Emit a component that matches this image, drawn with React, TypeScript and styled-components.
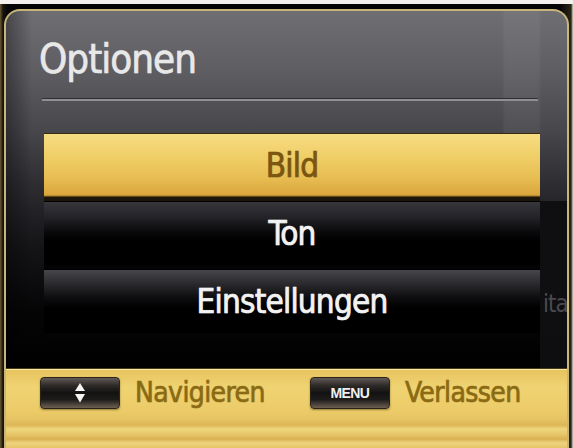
import React from "react";
import styled, { createGlobalStyle } from "styled-components";

const GlobalStyle = createGlobalStyle`
  html, body {
    margin: 0;
    padding: 0;
    background: #f4f2ee;
  }
  * {
    box-sizing: border-box;
  }
`;

const FONT = `"DejaVu Sans Condensed", "DejaVu Sans", "Liberation Sans", sans-serif`;

const Screen = styled.div`
  width: 573px;
  height: 448px;
  padding-top: 4px;
  overflow: hidden;
  background: #f4f2ee;
  font-family: ${FONT};
  font-stretch: condensed;
`;

const Frame = styled.div`
  height: 444px;
  padding: 5px 4px 0 4px;
  background: linear-gradient(to right, #6a5a30 0px, #15130e 3px, #050505 8px, #050505 560px, #2a2618 571px, #d8d2c0 573px);
`;

const Panel = styled.div`
  height: 100%;
  display: flex;
  flex-direction: column;
  overflow: hidden;
  border: 2px solid #c8b57a;
  border-bottom: none;
  border-radius: 16px 16px 0 0;
  background:
    linear-gradient(to right, rgba(0, 0, 0, 0.35) 0px, rgba(0, 0, 0, 0) 26px),
    linear-gradient(
      to bottom,
      #6e6e73 0px,
      #5d5d62 60px,
      #47474c 118px,
      #2c2c31 175px,
      #151518 235px,
      #050506 300px,
      #000 360px
    );
`;

const Header = styled.div`
  height: 122px;
  flex-shrink: 0;
  padding: 24px 0 0 33px;
  background: linear-gradient(
    to right,
    transparent 0px,
    transparent 496px,
    rgba(255, 255, 255, 0.05) 499px,
    rgba(255, 255, 255, 0.05) 532px,
    transparent 536px
  );
`;

const Title = styled.div`
  font-size: 40px;
  line-height: 48px;
  letter-spacing: -1px;
  color: #e8e8e8;
  -webkit-text-stroke: 0.5px #e8e8e8;
  text-shadow: 0 0 1px rgba(255, 255, 255, 0.5);
`;

const Divider = styled.div`
  width: 496px;
  height: 3px;
  margin: 15px 0 0 3px;
  border-top: 1px solid #2e2e33;
  background: #8f8f94;
`;

const Menu = styled.div`
  display: flex;
  flex-direction: column;
`;

const MenuRow = styled.div`
  display: flex;
  height: 68px;
`;

const Item = styled.div<{ $active?: boolean; $tone?: "dark" | "grey" }>`
  width: 496px;
  margin-left: 38px;
  display: flex;
  align-items: center;
  justify-content: center;
  font-size: 33px;
  letter-spacing: -0.8px;
  color: ${(p) => (p.$active ? "#7a5612" : "#f2f2f2")};
  -webkit-text-stroke: 0.6px ${(p) => (p.$active ? "#7a5612" : "#f2f2f2")};
  border-top: 1px solid ${(p) => (p.$active ? "#3a2a0e" : "transparent")};
  border-bottom: 4px solid ${(p) => (p.$active ? "#1c150a" : "#040405")};
  background: ${(p) =>
    p.$active
      ? "linear-gradient(to bottom, #f6dc82 0%, #f0cf68 35%, #e7bd52 70%, #d9a63c 97%, #3a2a0e 100%)"
      : p.$tone === "grey"
      ? "linear-gradient(to bottom, #46464b 0%, #2a2a2e 22%, #0c0c0e 45%, #000 60%)"
      : "linear-gradient(to bottom, #36363c 0%, #222227 25%, #09090b 48%, #000 62%)"};
  text-shadow: ${(p) =>
    p.$active ? "0 0 1px rgba(122, 86, 18, 0.6)" : "0 0 1px rgba(255, 255, 255, 0.6)"};
`;

const Side = styled.div<{ $shade?: boolean }>`
  flex: 1;
  display: flex;
  align-items: center;
  padding: 2px 0 0 3px;
  overflow: hidden;
  white-space: nowrap;
  font-size: 24px;
  letter-spacing: -1px;
  color: #4a4a4e;
  background: ${(p) => (p.$shade ? "#0f0f12" : "transparent")};
`;

const Gap = styled.div`
  flex: 1;
  display: flex;
`;

const GapSide = styled.div`
  margin-left: 534px;
  flex: 1;
  background: #0e0e11;
`;

const Footer = styled.div`
  height: 80px;
  flex-shrink: 0;
  display: flex;
  align-items: flex-start;
  padding: 7px 0 0 34px;
  border-top: 1px solid #4a3a14;
  box-shadow: inset 0 1px 0 #f8e9a6;
  background: linear-gradient(
    to bottom,
    #e6c35e 0px,
    #f0d372 18px,
    #eccc69 40px,
    #e7c463 50px,
    #dcb656 56px,
    #efd57c 60px,
    #e6c567 66px,
    #d9b152 70px,
    #eed37d 74px,
    #e4c262 80px
  );
`;

const Hint = styled.div`
  display: flex;
  align-items: center;
  height: 34px;
  margin-right: 45px;
`;

const Key = styled.div`
  width: 80px;
  height: 32px;
  display: flex;
  align-items: center;
  justify-content: center;
  margin-right: 15px;
  border-radius: 4px;
  border: 1px solid #2a241a;
  background: linear-gradient(
    to bottom,
    #625a56 0%,
    #2e2a28 25%,
    #121212 50%,
    #1e1c1a 72%,
    #6e6052 100%
  );
  box-shadow: 0 1px 2px rgba(60, 40, 0, 0.5);
  font-family: "Liberation Sans", Arial, sans-serif;
  font-stretch: normal;
  font-size: 14px;
  font-weight: bold;
  letter-spacing: -0.6px;
  color: #f0f0f0;
`;

const HintLabel = styled.span`
  font-size: 28px;
  line-height: 34px;
  letter-spacing: -0.6px;
  color: #8a6a14;
  -webkit-text-stroke: 0.5px #8a6a14;
  text-shadow: 0 0 1px rgba(138, 106, 20, 0.5);
`;

const ArrowsIcon = () => (
  <svg width="12" height="22" viewBox="0 0 12 22">
    <path d="M6 1 L11 9 L1 9 Z" fill="#f4f4f4" />
    <path d="M1 12 L11 12 L6 20.5 Z" fill="#f4f4f4" />
  </svg>
);

export default function App() {
  return (
    <>
      <GlobalStyle />
      <Screen>
        <Frame>
          <Panel>
            <Header>
              <Title>Optionen</Title>
              <Divider />
            </Header>

            <Menu>
              <MenuRow>
                <Item $active>Bild</Item>
                <Side />
              </MenuRow>
              <MenuRow>
                <Item $tone="dark">Ton</Item>
                <Side $shade />
              </MenuRow>
              <MenuRow>
                <Item $tone="grey">Einstellungen</Item>
                <Side $shade>ita</Side>
              </MenuRow>
            </Menu>

            <Gap>
              <GapSide />
            </Gap>

            <Footer>
              <Hint>
                <Key>
                  <ArrowsIcon />
                </Key>
                <HintLabel>Navigieren</HintLabel>
              </Hint>
              <Hint>
                <Key>MENU</Key>
                <HintLabel>Verlassen</HintLabel>
              </Hint>
            </Footer>
          </Panel>
        </Frame>
      </Screen>
    </>
  );
}
